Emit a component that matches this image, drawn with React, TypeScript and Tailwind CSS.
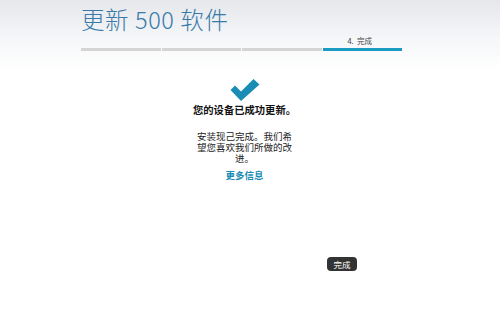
import React from "react";

export default function App() {
  return (
    <div
      className="w-[500px] h-[335px] overflow-hidden bg-[linear-gradient(to_bottom,#e5e7eb_0px,#f6f7f9_40px,#ffffff_70px)]"
      style={{ fontFamily: '"Noto Sans CJK SC", "Noto Sans", sans-serif' }}
    >
      <div className="ml-[81px] w-[321px] flex flex-col">
        <div className="h-[36px] pt-[5px] text-[23.5px] leading-[28px] text-[#3a7aa8] font-light tracking-[0.6px]">
          更新 500 软件
        </div>
        <div className="h-[12px] flex justify-end pr-[30px] text-[7.5px] leading-[10px] text-[#444]">
          4.&nbsp;&nbsp;完成
        </div>
        <div className="flex gap-[1px] h-[3px]">
          <div className="flex-1 bg-[#d4d4d4]" />
          <div className="flex-1 bg-[#d4d4d4]" />
          <div className="flex-1 bg-[#d4d4d4]" />
          <div className="flex-1 bg-[#1a9bc4]" />
        </div>
        <div className="flex flex-col items-center pl-[6px] pt-[28px]">
          <svg width="30" height="22" viewBox="0 0 30 22">
            <path d="M0.5 11 L5 6.5 L11 12.5 L23.5 0 L29.5 5.5 L11 22 Z" fill="#1a8db4" />
          </svg>
          <div className="mt-[2px] text-[10.3px] leading-[13px] font-bold text-[#111]">
            您的设备已成功更新。
          </div>
          <div className="mt-[15px] w-[100px] text-center text-[9.5px] leading-[11px] text-[#222]">
            安装现己完成。我们希望您喜欢我们所做的改进。
          </div>
          <div className="mt-[5px] text-[9.5px] leading-[12px] font-bold text-[#1a8db4]">
            更多信息
          </div>
        </div>
        <div className="mt-[76px] flex justify-end pr-[45px]">
          <div className="w-[30px] h-[14px] rounded-[4px] bg-[#333] text-white text-[8.5px] leading-[14px] text-center">
            完成
          </div>
        </div>
      </div>
    </div>
  );
}
